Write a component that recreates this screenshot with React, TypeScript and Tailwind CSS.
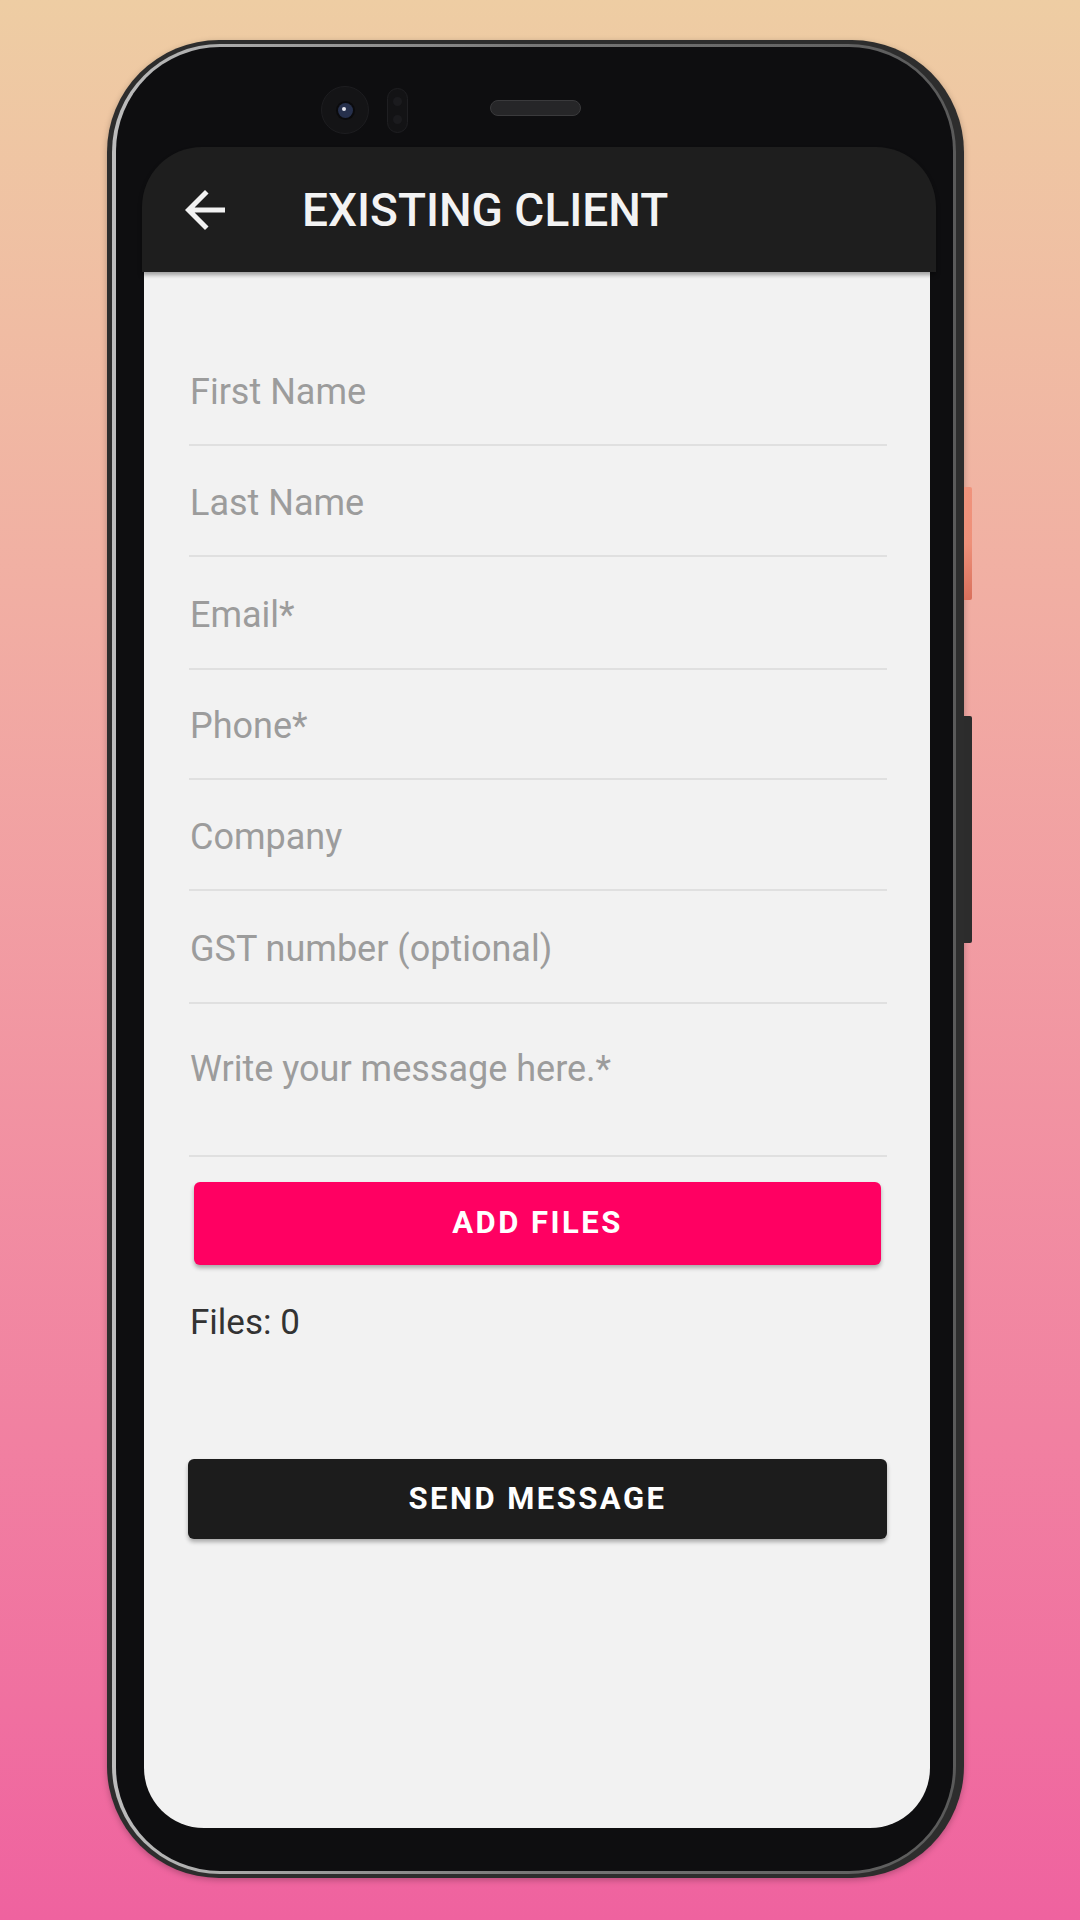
const fields = [
    {label: 'First Name', h: 'h-[111px]'},
    {label: 'Last Name', h: 'h-[111px]'},
    {label: 'Email*', h: 'h-[113px]'},
    {label: 'Phone*', h: 'h-[110px]'},
    {label: 'Company', h: 'h-[111px]'},
    {label: 'GST number (optional)', h: 'h-[113px]'},
]

function BackArrow() {
    return (
        <svg width="60" height="60" viewBox="0 0 24 24" className="ml-[33px] shrink-0">
            <path
                fill="#f2f2f2"
                d="M20 11H7.83l5.59-5.59L12 4l-8 8 8 8 1.41-1.41L7.83 13H20v-2z"
            />
        </svg>
    )
}

function Notch() {
    return (
        <>
            <div className="absolute left-[214px] top-[46px] flex h-[48px] w-[48px] items-center justify-center rounded-full border border-[#1d1d20] bg-[#141416]">
                <div className="relative h-[15px] w-[15px] rounded-full bg-[#26304c] shadow-[0_0_0_2px_#0b0b0d]">
                    <div className="absolute left-[4px] top-[4px] h-[4px] w-[4px] rounded-full bg-[#e8e8f0]" />
                </div>
            </div>
            <div className="absolute left-[280px] top-[48px] flex h-[45px] w-[21px] flex-col items-center justify-around rounded-full border border-[#1f1f22] bg-[#131315] py-[4px]">
                <div className="h-[9px] w-[9px] rounded-full bg-[#1b1b1e]" />
                <div className="h-[9px] w-[9px] rounded-full bg-[#1b1b1e]" />
            </div>
            <div className="absolute left-[383px] top-[60px] h-[16px] w-[91px] rounded-full border border-[#3a3a3c] bg-[#262628]" />
        </>
    )
}

function ClientForm() {
    return (
        <div className="flex flex-col pl-[45px] pr-[43px] pt-[63px]">
            {fields.map((f) => (
                <div
                    key={f.label}
                    className={`${f.h} flex items-center border-b-[2px] border-[#e0e0e0] pt-[4px] pl-[1px]`}
                >
                    <span className="text-[36px] leading-none text-[#9c9c9c]">{f.label}</span>
                </div>
            ))}
            <div className="h-[153px] border-b-[2px] border-[#e0e0e0] pl-[1px] pt-[47px]">
                <span className="text-[36px] leading-none text-[#9c9c9c]">
                    Write your message here.*
                </span>
            </div>
            <button className="ml-[5px] mr-[6px] mt-[25px] flex h-[83px] items-center justify-center rounded-[6px] bg-[#ff0062] text-[31px] font-bold uppercase tracking-[0.08em] text-white shadow-[0_3px_4px_rgba(0,0,0,0.3)]">
                Add Files
            </button>
            <p className="mt-[40px] pl-[1px] text-[35px] leading-[36px] text-[#333333]">Files: 0</p>
            <button className="-ml-px mt-[118px] flex h-[80px] items-center justify-center rounded-[6px] bg-[#1c1c1c] text-[31px] font-bold uppercase tracking-[0.08em] text-white shadow-[0_3px_4px_rgba(0,0,0,0.3)]">
                Send Message
            </button>
        </div>
    )
}

export default function App() {
    return (
        <div className="min-h-[1920px] w-[1080px] bg-linear-to-b from-[#eecda3] to-[#ef629f] pl-[107px] pt-[40px] font-['Roboto',sans-serif]">
            <div className="relative h-[1838px] w-[857px]">
                <div className="absolute left-[857px] top-[447px] h-[113px] w-[8px] rounded-r-[2px] bg-linear-to-b from-[#f0937c] via-[#ee9079] to-[#d9705c]" />
                <div className="absolute left-[857px] top-[676px] h-[227px] w-[8px] rounded-r-[2px] bg-[#2c2c2c]" />
                <div className="h-full rounded-[112px] bg-[#2d2d2d] pb-[4px] pl-[5px] pr-[8px] pt-[4px] shadow-[0_2px_6px_rgba(0,0,0,0.25)]">
                    <div className="h-full rounded-[108px] bg-linear-to-r from-[#bdbdbd] via-[#777777] to-[#5a5a5a] p-[3px] pl-[4px]">
                        <div className="flex h-full flex-col rounded-[104px] bg-[#0e0e10] pb-[43px] pl-[26px] pr-[17px] pt-[100px]">
                            <div className="flex flex-1 flex-col">
                                <header className="relative z-10 flex h-[125px] shrink-0 items-center rounded-t-[60px] bg-[#1e1e1e] shadow-[0_3px_4px_rgba(0,0,0,0.35)]">
                                    <BackArrow />
                                    <h1 className="ml-[67px] text-[46px] font-medium leading-none tracking-normal text-[#f3f3f3]">
                                        EXISTING CLIENT
                                    </h1>
                                </header>
                                <main className="ml-[2px] mr-[6px] flex-1 rounded-b-[60px] bg-[#f2f2f2]">
                                    <ClientForm />
                                </main>
                            </div>
                        </div>
                    </div>
                </div>
                <Notch />
            </div>
        </div>
    )
}
